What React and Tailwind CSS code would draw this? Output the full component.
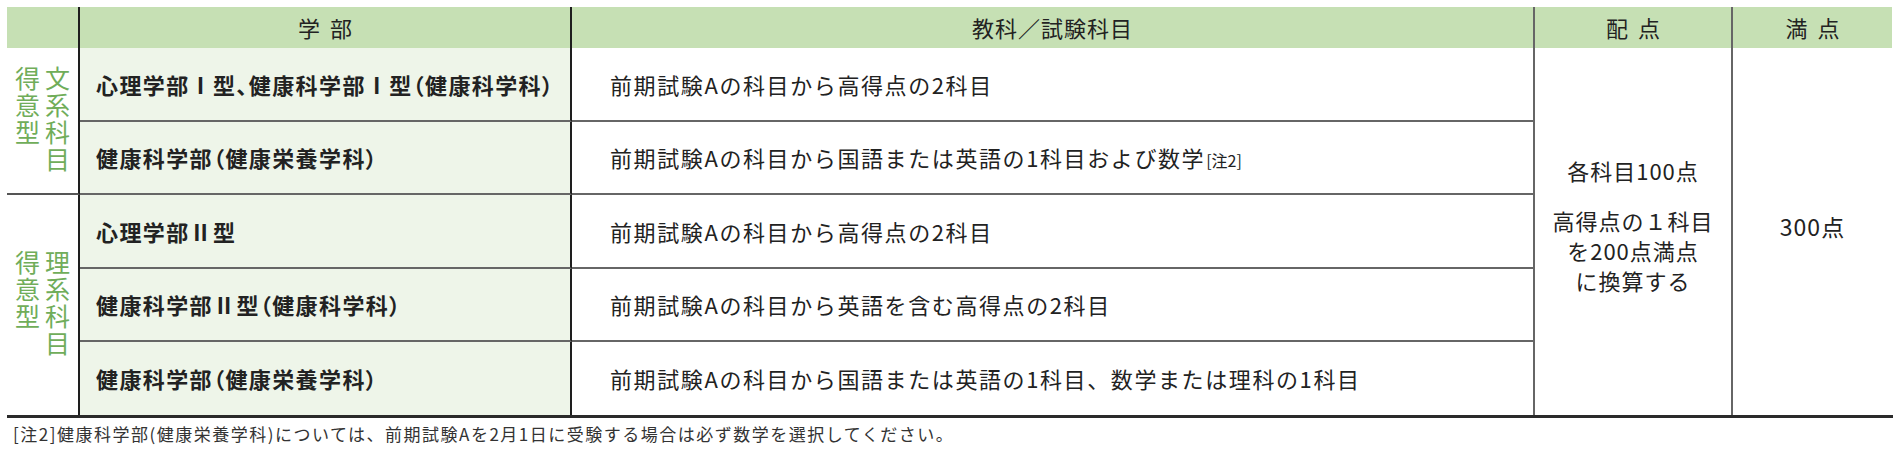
import React from 'react';

const rows = [
  { dept: '心理学部Ⅰ型、健康科学部Ⅰ型（健康科学科）', subj: '前期試験Aの科目から高得点の2科目' },
  { dept: '健康科学部（健康栄養学科）', subj: '前期試験Aの科目から国語または英語の1科目および数学', note: '[注2]' },
  { dept: '心理学部Ⅱ型', subj: '前期試験Aの科目から高得点の2科目' },
  { dept: '健康科学部Ⅱ型（健康科学科）', subj: '前期試験Aの科目から英語を含む高得点の2科目' },
  { dept: '健康科学部（健康栄養学科）', subj: '前期試験Aの科目から国語または英語の1科目、数学または理科の1科目' },
];

// 縦書きラベル（右列→左列）
function GroupLabel({ text }) {
  return (
    <div className="[writing-mode:vertical-rl] h-[110px] text-[25px] leading-[30px] tracking-[2px] text-[#70ad5a]">
      {text}
    </div>
  );
}

export default function App() {
  return (
    <div className="w-[1900px] h-[461px] bg-white px-[7px] pt-[7px] text-[#222] font-['Noto_Sans_CJK_JP','Noto_Sans',sans-serif]">
      <div className="grid grid-cols-[73px_492px_963px_198px_159px] grid-rows-[41px_74px_73px_74px_73px_73px] border-b-[3px] border-[#2a2a2a]">
        {/* header */}
        <div className="col-start-1 row-start-1 bg-[#c6e0b4] border-r-2 border-[#1e1e1e]" />
        <div className="col-start-2 row-start-1 bg-[#c6e0b4] border-r-2 border-[#1e1e1e] flex items-center justify-center text-[22px] [word-spacing:5px]">学 部</div>
        <div className="col-start-3 row-start-1 bg-[#c6e0b4] border-r-2 border-[#666] flex items-center justify-center text-[22px] tracking-[1px]">教科／試験科目</div>
        <div className="col-start-4 row-start-1 bg-[#c6e0b4] border-r-2 border-[#666] flex items-center justify-center text-[22px] [word-spacing:5px]">配 点</div>
        <div className="col-start-5 row-start-1 bg-[#c6e0b4] flex items-center justify-center text-[22px] [word-spacing:5px]">満 点</div>

        {/* group labels */}
        <div className="col-start-1 row-start-2 row-span-2 border-r-2 border-b-2 border-r-[#1e1e1e] border-b-[#555] flex items-center justify-center">
          <GroupLabel text="文系科目得意型" />
        </div>
        <div className="col-start-1 row-start-4 row-span-3 border-r-2 border-[#1e1e1e] flex items-center justify-center">
          <GroupLabel text="理系科目得意型" />
        </div>

        {rows.map((r, i) => {
          const last = i === rows.length - 1;
          return (
            <React.Fragment key={i}>
              <div
                className={`col-start-2 bg-[#eef5e9] border-r-2 border-r-[#1e1e1e] flex items-center pl-[16px] text-[22px] tracking-[1.4px] font-bold [font-feature-settings:'palt'] ${last ? '' : 'border-b-2 border-b-[#666]'}`}
                style={{ gridRowStart: i + 2 }}
              >
                {r.dept}
              </div>
              <div
                className={`col-start-3 border-r-2 border-r-[#666] flex items-center pl-[38px] text-[22px] tracking-[1.6px] ${last ? '' : 'border-b-2 border-b-[#666]'}`}
                style={{ gridRowStart: i + 2 }}
              >
                <p>
                  {r.subj}
                  {r.note && <span className="text-[16px] tracking-normal ml-[1px]">{r.note}</span>}
                </p>
              </div>
            </React.Fragment>
          );
        })}

        {/* points */}
        <div className="col-start-4 row-start-2 row-span-5 border-r-2 border-[#666] flex flex-col items-center justify-center pb-[14px] text-center text-[22px] leading-[30px] tracking-[1px]">
          <p>各科目100点</p>
          <p className="mt-[20px]">高得点の１科目<br />を200点満点<br />に換算する</p>
        </div>
        <div className="col-start-5 row-start-2 row-span-5 flex items-center justify-center pb-[10px] text-[23px] tracking-[1px]">
          300点
        </div>
      </div>

      <p className="mt-[4px] pl-[6px] text-[17px] leading-[24px] tracking-[1.5px] text-[#333]">
        [注2]健康科学部(健康栄養学科)については、前期試験Aを2月1日に受験する場合は必ず数学を選択してください。
      </p>
    </div>
  );
}
